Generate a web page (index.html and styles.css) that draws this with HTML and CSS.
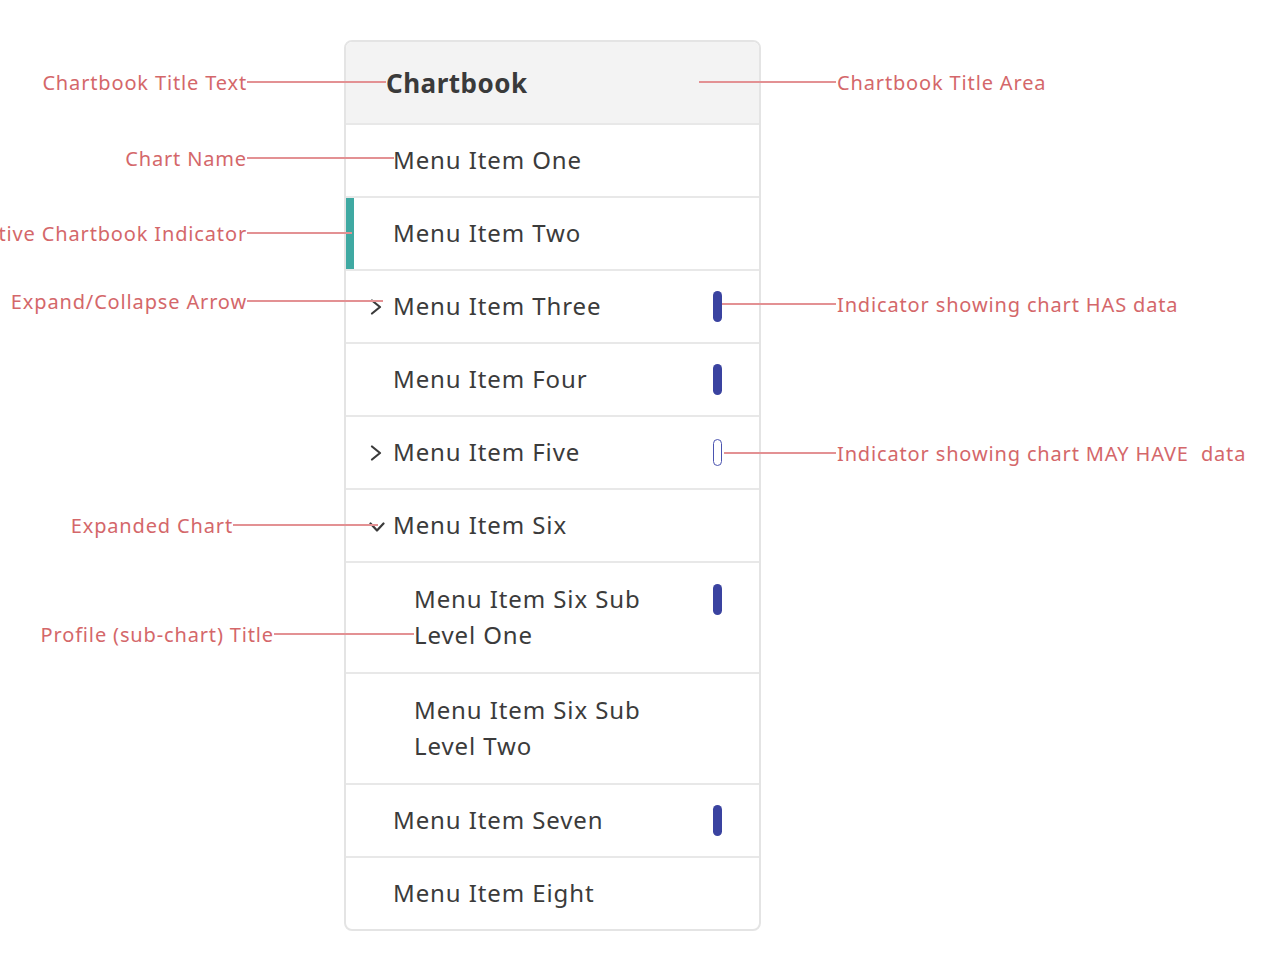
FILE: index.html
```html
<!DOCTYPE html>
<html lang="en">
<head>
    <meta charset="UTF-8">
    <meta name="viewport" content="width=device-width, initial-scale=1.0">
    <title>Chartbook - menu anatomy</title>
    <link rel="stylesheet" href="styles.css">
</head>
<body>
    <div class="diagram">
        <nav class="chartbook">
            <div class="chartbook-title">Chartbook</div>
            <ul class="menu">
                <li class="menu-item">
                    <span class="arrow"></span>
                    <span class="menu-label">Menu Item One</span>
                </li>
                <li class="menu-item active">
                    <span class="arrow"></span>
                    <span class="menu-label">Menu Item Two</span>
                </li>
                <li class="menu-item">
                    <span class="arrow collapsed">
                        <svg viewBox="0 0 12 16" width="12" height="16"><path d="M2 1.5 L10 8 L2 14.5" /></svg>
                    </span>
                    <span class="menu-label">Menu Item Three</span>
                    <span class="data-flag has-data"></span>
                </li>
                <li class="menu-item">
                    <span class="arrow"></span>
                    <span class="menu-label">Menu Item Four</span>
                    <span class="data-flag has-data"></span>
                </li>
                <li class="menu-item">
                    <span class="arrow collapsed">
                        <svg viewBox="0 0 12 16" width="12" height="16"><path d="M2 1.5 L10 8 L2 14.5" /></svg>
                    </span>
                    <span class="menu-label">Menu Item Five</span>
                    <span class="data-flag may-have-data"></span>
                </li>
                <li class="menu-item">
                    <span class="arrow expanded">
                        <svg viewBox="0 0 16 10" width="16" height="10"><path d="M1.5 1.5 L8 8.5 L14.5 1.5" /></svg>
                    </span>
                    <span class="menu-label">Menu Item Six</span>
                </li>
                <li class="menu-item sub-item">
                    <span class="menu-label">Menu Item Six Sub<br>Level One</span>
                    <span class="data-flag has-data"></span>
                </li>
                <li class="menu-item sub-item">
                    <span class="menu-label">Menu Item Six Sub<br>Level Two</span>
                </li>
                <li class="menu-item">
                    <span class="arrow"></span>
                    <span class="menu-label">Menu Item Seven</span>
                    <span class="data-flag has-data"></span>
                </li>
                <li class="menu-item">
                    <span class="arrow"></span>
                    <span class="menu-label">Menu Item Eight</span>
                </li>
            </ul>
        </nav>

        <!-- callouts on the left -->
        <div class="callout left c-title-text"><span class="callout-text">Chartbook Title Text</span><span class="leader"></span></div>
        <div class="callout left c-chart-name"><span class="callout-text">Chart Name</span><span class="leader"></span></div>
        <div class="callout left c-active"><span class="callout-text">Active Chartbook Indicator</span><span class="leader"></span></div>
        <div class="callout left c-arrow"><span class="callout-text">Expand/Collapse Arrow</span><span class="leader"></span></div>
        <div class="callout left c-expanded"><span class="callout-text">Expanded Chart</span><span class="leader"></span></div>
        <div class="callout left c-profile"><span class="callout-text">Profile (sub-chart) Title</span><span class="leader"></span></div>

        <!-- callouts on the right -->
        <div class="callout right c-title-area"><span class="leader"></span><span class="callout-text">Chartbook Title Area</span></div>
        <div class="callout right c-has-data"><span class="leader"></span><span class="callout-text">Indicator showing chart HAS data</span></div>
        <div class="callout right c-may-have"><span class="leader"></span><span class="callout-text">Indicator showing chart MAY HAVE&nbsp; data</span></div>
    </div>
</body>
</html>
```

FILE: styles.css
```css
body {
    margin: 0;
    padding: 0;
    background: #ffffff;
    font-family: 'Noto Sans', 'Open Sans', sans-serif;
    color: #3b3b3b;
}
.diagram {
    position: relative;
    width: 1280px;
    height: 963px;
    overflow: hidden;
    padding-top: 40px;
    box-sizing: border-box;
}
.chartbook {
    width: 413px;
    margin-left: 344px;
    border: 2px solid #e4e4e4;
    border-radius: 8px;
    overflow: hidden;
    background: #fff;
}
.chartbook-title {
    height: 81px;
    display: flex;
    align-items: center;
    padding-left: 40px;
    background: #f3f3f3;
    font-size: 26px;
    letter-spacing: 0.5px;
    font-weight: bold;
    color: #3a3a3a;
}
.menu {
    list-style: none;
    margin: 0;
    padding: 0;
}
.menu-item {
    display: flex;
    align-items: center;
    height: 71px;
    border-top: 2px solid #e8e8e8;
    padding: 0 37px 0 24px;
    font-size: 24px;
    letter-spacing: 0.9px;
}
.menu-item.sub-item {
    height: 109px;
    padding-left: 68px;
    line-height: 36px;
}
.menu-item.active {
    box-shadow: inset 8px 0 0 #3fa9a2;
}
.menu-label {
    flex: 1;
    margin-top: -2px;
}
.arrow {
    width: 23px;
    flex: none;
    display: flex;
    align-items: center;
}
.arrow svg {
    fill: none;
    stroke: #3a3a3a;
    stroke-width: 2.2;
    stroke-linecap: round;
    stroke-linejoin: round;
}
.arrow.expanded svg {
    margin-top: 2px;
    margin-left: -1px;
}
.data-flag {
    flex: none;
    width: 9px;
    height: 31px;
    border-radius: 5px;
    box-sizing: border-box;
}
.data-flag.has-data {
    background: #3a43a0;
}
.data-flag.may-have-data {
    height: 27px;
    border: 1.5px solid #4a53b0;
    background: #fff;
}
.sub-item .data-flag {
    align-self: flex-start;
    margin-top: 21px;
}

/* annotation callouts */
.callout {
    position: absolute;
    display: flex;
    align-items: center;
    height: 26px;
    font-size: 20px;
    letter-spacing: 0.85px;
    color: #d4676a;
    white-space: nowrap;
}
.callout.left {
    justify-content: flex-end;
}
.leader {
    height: 2px;
    background: #e39193;
}
.callout.right .leader {
    margin-right: 1px;
}
.c-title-text { top: 69px; right: 894px; }
.c-title-text .leader { width: 139px; }
.c-chart-name { top: 145px; right: 886px; }
.c-chart-name .leader { width: 147px; }
.c-active { top: 220px; right: 928px; }
.c-active .leader { width: 105px; }
.c-arrow { top: 288px; right: 897px; }
.c-arrow .leader { width: 136px; }
.c-expanded { top: 512px; right: 902px; }
.c-expanded .leader { width: 145px; }
.c-profile { top: 621px; right: 866px; }
.c-profile .leader { width: 140px; }
.c-title-area { top: 69px; left: 699px; }
.c-title-area .leader { width: 137px; }
.c-has-data { top: 291px; left: 722px; }
.c-has-data .leader { width: 114px; }
.c-may-have { top: 440px; left: 724px; }
.c-may-have .leader { width: 112px; }
```
